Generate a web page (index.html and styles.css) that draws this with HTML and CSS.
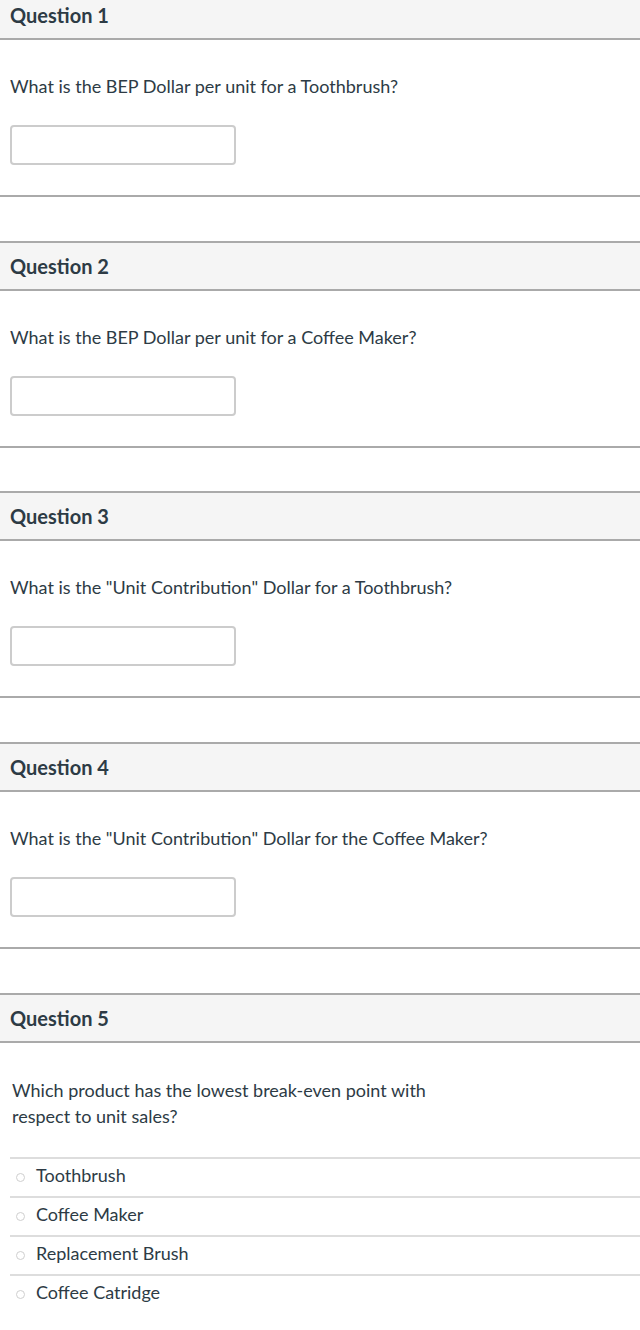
FILE: index.html
```html
<!DOCTYPE html>
<html>
<head>
<meta charset="utf-8">
<link rel="stylesheet" href="styles.css">
</head>
<body>
<div class="quiz">
  <div class="question">
    <div class="q-header">Question 1</div>
    <div class="q-body">
      <div class="q-text">What is the BEP Dollar per unit for a Toothbrush?</div>
      <input class="q-input" type="text">
    </div>
  </div>
  <div class="question">
    <div class="q-header">Question 2</div>
    <div class="q-body">
      <div class="q-text">What is the BEP Dollar per unit for a Coffee Maker?</div>
      <input class="q-input" type="text">
    </div>
  </div>
  <div class="question">
    <div class="q-header">Question 3</div>
    <div class="q-body">
      <div class="q-text">What is the "Unit Contribution" Dollar for a Toothbrush?</div>
      <input class="q-input" type="text">
    </div>
  </div>
  <div class="question">
    <div class="q-header">Question 4</div>
    <div class="q-body">
      <div class="q-text">What is the "Unit Contribution" Dollar for the Coffee Maker?</div>
      <input class="q-input" type="text">
    </div>
  </div>
  <div class="question last">
    <div class="q-header">Question 5</div>
    <div class="q-body mc">
      <div class="q-text narrow">Which product has the lowest break-even point with respect to unit sales?</div>
      <div class="answers">
        <label class="answer"><span class="radio"></span>Toothbrush</label>
        <label class="answer"><span class="radio"></span>Coffee Maker</label>
        <label class="answer"><span class="radio"></span>Replacement Brush</label>
        <label class="answer"><span class="radio"></span>Coffee Catridge</label>
      </div>
    </div>
  </div>
</div>
</body>
</html>
```
FILE: styles.css
```css
html, body {
  margin: 0;
  padding: 0;
  background: #ffffff;
}
body {
  font-family: Lato, "Open Sans", sans-serif;
  color: #2d3b45;
  font-size: 18px;
  overflow: hidden;
}
.quiz {
  margin-top: -10px;
  display: flex;
  flex-direction: column;
  gap: 43.67px;
}
.question {
  border-bottom: 2px solid #aaaaaa;
}
.question.last {
  border-bottom: none;
}
.q-header {
  background: #f5f5f5;
  border-top: 2px solid #aaaaaa;
  border-bottom: 2px solid #aaaaaa;
  height: 46px;
  display: flex;
  align-items: center;
  padding-left: 10px;
  font-weight: bold;
  font-size: 20px;
}
.q-body {
  padding: 34px 0 30px 10px;
}
.q-text {
  line-height: 24px;
  margin-bottom: 27px;
}
.q-input {
  display: block;
  box-sizing: border-box;
  width: 226px;
  height: 40px;
  margin: 0;
  border: 2px solid #cccccc;
  border-radius: 4px;
  background: #fff;
}
.q-body.mc {
  padding: 34px 0 20px 10px;
}
.q-text.narrow {
  width: 430px;
  padding-left: 2px;
  line-height: 26px;
  margin-bottom: 28px;
}
.answers {
  display: flex;
  flex-direction: column;
}
.answer {
  display: flex;
  align-items: flex-start;
  line-height: 24px;
  padding-top: 4px;
  box-sizing: border-box;
  height: 39px;
  border-top: 2px solid #dddddd;
  padding-left: 6px;
}
.radio {
  flex: none;
  width: 7px;
  height: 7px;
  border: 1px solid #cfcfcf;
  border-radius: 50%;
  margin-right: 11px;
  margin-top: 10px;
}
```
